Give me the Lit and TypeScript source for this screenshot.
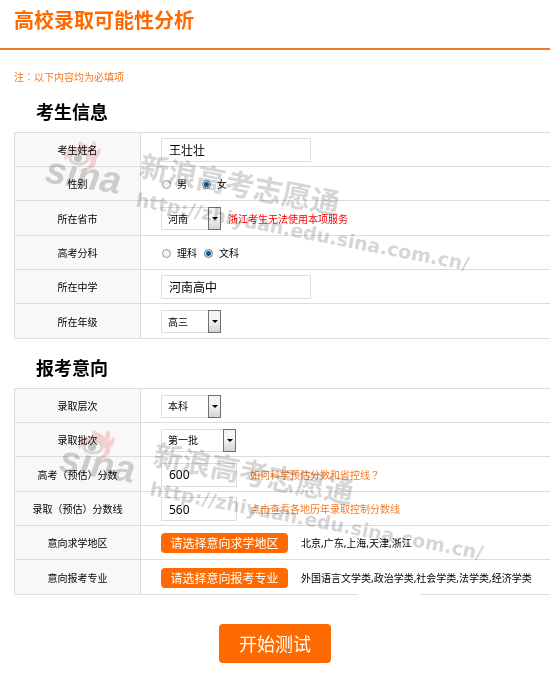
import { LitElement, html, css, svg } from "lit";
import { customElement, property } from "lit/decorators.js";

@customElement("site-watermark")
class SiteWatermark extends LitElement {
  static styles = css`
    :host {
      display: block;
      pointer-events: none;
      mix-blend-mode: multiply;
    }
    svg {
      display: block;
      overflow: visible;
    }
    .logo {
      font: italic bold 38px "Liberation Sans", Arial, sans-serif;
      fill: #d2d2d2;
    }
    .name {
      font: bold 29px "Noto Sans CJK SC", sans-serif;
      fill: #d6d6d6;
    }
    .url {
      font: bold 19px "DejaVu Sans", sans-serif;
      fill: #d6d6d6;
    }
    .flame {
      fill: #f9d6d6;
    }
    .ring {
      fill: #fff;
      stroke: #e6d8d8;
      stroke-width: 3;
    }
    .pupil {
      fill: #c9c9c9;
    }
  `;

  render() {
    return html`<svg width="450" height="150" viewBox="0 0 450 150" aria-hidden="true">
      ${svg`
        <path class="flame" d="M25 31 C22 21 31 16 40 18 C38 15 37 13 40 11 C44 15 49 14 50 19 C53 15 51 12 54 11 C58 15 56 19 54 22 C57 21 59 19 60 17 C62 24 58 27 56 29 C58 37 48 42 38 41 C48 39 53 33 50 28 C46 21 31 21 25 31 Z"/>
        <ellipse class="ring" cx="39" cy="28" rx="9" ry="6"/>
        <circle class="pupil" cx="38" cy="28" r="4"/>
        <text class="logo" x="4" y="52" transform="rotate(9 4 52)">sına</text>
        <text class="name" x="98" y="46" transform="rotate(11 98 46)">新浪高考志愿通</text>
        <text class="url" x="95" y="76" transform="rotate(11 95 76)">http://zhiyuan.edu.sina.com.cn/</text>
      `}
    </svg>`;
  }
}

@customElement("select-box")
class SelectBox extends LitElement {
  @property() label = "";
  @property({ type: Array }) options: string[] = [];

  static styles = css`
    :host {
      display: inline-grid;
      width: 60px;
      height: 23px;
    }
    :host([wide]) {
      width: 75px;
    }
    select,
    .arrow {
      grid-area: 1 / 1;
      box-sizing: border-box;
    }
    select {
      appearance: none;
      width: 100%;
      margin: 0;
      padding: 0 14px 0 6px;
      border: 1px solid #ddd;
      border-radius: 0;
      background: transparent;
      color: #000;
      font: inherit;
    }
    .arrow {
      justify-self: end;
      display: grid;
      place-items: center;
      width: 13px;
      border: 1px solid #707070;
      background: linear-gradient(#f4f4f4 45%, #d4d4d4);
      pointer-events: none;
    }
    .arrow::before {
      content: "";
      border: 3px solid transparent;
      border-top-color: #000;
      border-bottom: 0;
    }
  `;

  render() {
    return html`
      <select aria-label=${this.label}>
        ${this.options.map((o) => html`<option>${o}</option>`)}
      </select>
      <span class="arrow"></span>
    `;
  }
}

@customElement("app-root")
class AppRoot extends LitElement {
  static styles = css`
    :host {
      display: block;
      overflow: hidden;
      background: #fff;
      color: #000;
      font: 10px/16px "Noto Sans", "Noto Sans CJK SC", sans-serif;
    }
    header {
      padding: 6px 14px 14px;
      border-bottom: 2px solid #f47a26;
    }
    h1 {
      margin: 0;
      color: #ff6a00;
      font: bold 20px/28px "Noto Sans CJK SC", sans-serif;
    }
    .note {
      margin: 19px 14px 14px;
      color: #f47a26;
    }
    .mark {
      font-family: "Noto Sans CJK TC", sans-serif;
    }
    .group {
      position: relative;
      margin-left: 14px;
    }
    h2 {
      margin: 0;
      padding: 0 22px 9px;
      font: bold 18px/24px "Noto Sans CJK SC", sans-serif;
    }
    .group + .group {
      margin-top: 16px;
    }
    table {
      width: 100%;
      border-collapse: collapse;
      table-layout: fixed;
    }
    .names {
      width: 126px;
    }
    tr {
      height: 34px;
    }
    tr:nth-child(3n) {
      height: 35px;
    }
    th,
    td {
      padding: 1px 0 0;
      border: 1px solid #ddd;
      white-space: nowrap;
    }
    th {
      background: #f8f8f8;
      font-weight: normal;
      text-align: center;
    }
    td {
      border-right: 0;
    }
    .line {
      display: flex;
      align-items: center;
      padding-left: 20px;
    }
    .text {
      box-sizing: border-box;
      width: 150px;
      height: 24px;
      padding: 0 7px;
      border: 1px solid #ddd;
      background: transparent;
      color: #000;
      font: 12px/16px "Noto Sans", "Noto Sans CJK SC", sans-serif;
    }
    .score {
      width: 76px;
      margin-right: 13px;
    }
    .warn {
      margin-left: 7px;
      color: #f00;
    }
    a {
      color: #f47a26;
      text-decoration: none;
    }
    .choice {
      display: flex;
      align-items: center;
      gap: 6px;
      margin-right: 6px;
    }
    .short .choice {
      margin-right: 14px;
    }
    .choice input {
      appearance: none;
      box-sizing: border-box;
      width: 9px;
      height: 9px;
      margin: 0 0 0 1px;
      border: 1px solid #999;
      border-radius: 50%;
      background: #f2f2f2;
    }
    .choice input:checked {
      border-color: #5f7f99;
      background: radial-gradient(circle, #17588c 0 2px, #d5eaf5 3px);
    }
    .pick {
      width: 127px;
      height: 20px;
      margin-right: 13px;
      padding: 0;
      border: 0;
      border-radius: 4px;
      background: #ff6a00;
      color: #fff;
      font: 12px/20px "Noto Sans CJK SC", sans-serif;
    }
    .go {
      display: block;
      margin: 29px auto 21px;
      padding: 0 20px;
      border: 0;
      border-radius: 4px;
      background: #ff6a00;
      color: #fff;
      font: 18px/39px "Noto Sans CJK SC", sans-serif;
    }
    site-watermark {
      position: absolute;
      top: 31px;
      left: 26px;
    }
    .lower site-watermark {
      top: 64px;
      left: 40px;
    }
    .lower::after {
      content: "";
      position: absolute;
      left: 344px;
      bottom: 0;
      width: 62px;
      height: 2px;
      background: #fff;
    }
  `;

  private radio(group: string, label: string, checked = false) {
    return html`<label class="choice">
      <input type="radio" name=${group} ?checked=${checked} />${label}
    </label>`;
  }

  private row(label: string, content: unknown, kind = "") {
    return html`<tr>
      <th scope="row">${label}</th>
      <td><div class="line ${kind}">${content}</div></td>
    </tr>`;
  }

  render() {
    return html`
      <header><h1>高校录取可能性分析</h1></header>
      <p class="note">注<span class="mark">：</span>以下内容均为必填项</p>

      <section class="group">
        <h2>考生信息</h2>
        <table>
          <colgroup><col class="names" /><col /></colgroup>
          <tbody>
            ${this.row("考生姓名", html`<input class="text" aria-label="考生姓名" value="王壮壮" />`)}
            ${this.row("性别", [this.radio("sex", "男"), this.radio("sex", "女", true)], "short")}
            ${this.row(
              "所在省市",
              html`<select-box label="所在省市" .options=${["河南"]}></select-box>
                <span class="warn">浙江考生无法使用本项服务</span>`
            )}
            ${this.row("高考分科", [this.radio("branch", "理科"), this.radio("branch", "文科", true)])}
            ${this.row("所在中学", html`<input class="text" aria-label="所在中学" value="河南高中" />`)}
            ${this.row("所在年级", html`<select-box label="所在年级" .options=${["高三"]}></select-box>`)}
          </tbody>
        </table>
        <site-watermark></site-watermark>
      </section>

      <section class="group lower">
        <h2>报考意向</h2>
        <table>
          <colgroup><col class="names" /><col /></colgroup>
          <tbody>
            ${this.row("录取层次", html`<select-box label="录取层次" .options=${["本科"]}></select-box>`)}
            ${this.row("录取批次", html`<select-box wide label="录取批次" .options=${["第一批"]}></select-box>`)}
            ${this.row(
              "高考（预估）分数",
              html`<input class="text score" aria-label="高考（预估）分数" value="600" />
                <a href="#estimate">如何科学预估分数和省控线<span class="mark">？</span></a>`
            )}
            ${this.row(
              "录取（预估）分数线",
              html`<input class="text score" aria-label="录取（预估）分数线" value="560" />
                <a href="#history">点击查看各地历年录取控制分数线</a>`
            )}
            ${this.row(
              "意向求学地区",
              html`<button class="pick" type="button">请选择意向求学地区</button>
                <span>北京,广东,上海,天津,浙江</span>`
            )}
            ${this.row(
              "意向报考专业",
              html`<button class="pick" type="button">请选择意向报考专业</button>
                <span>外国语言文学类,政治学类,社会学类,法学类,经济学类</span>`
            )}
          </tbody>
        </table>
        <site-watermark></site-watermark>
      </section>

      <button class="go" type="button">开始测试</button>
    `;
  }
}
